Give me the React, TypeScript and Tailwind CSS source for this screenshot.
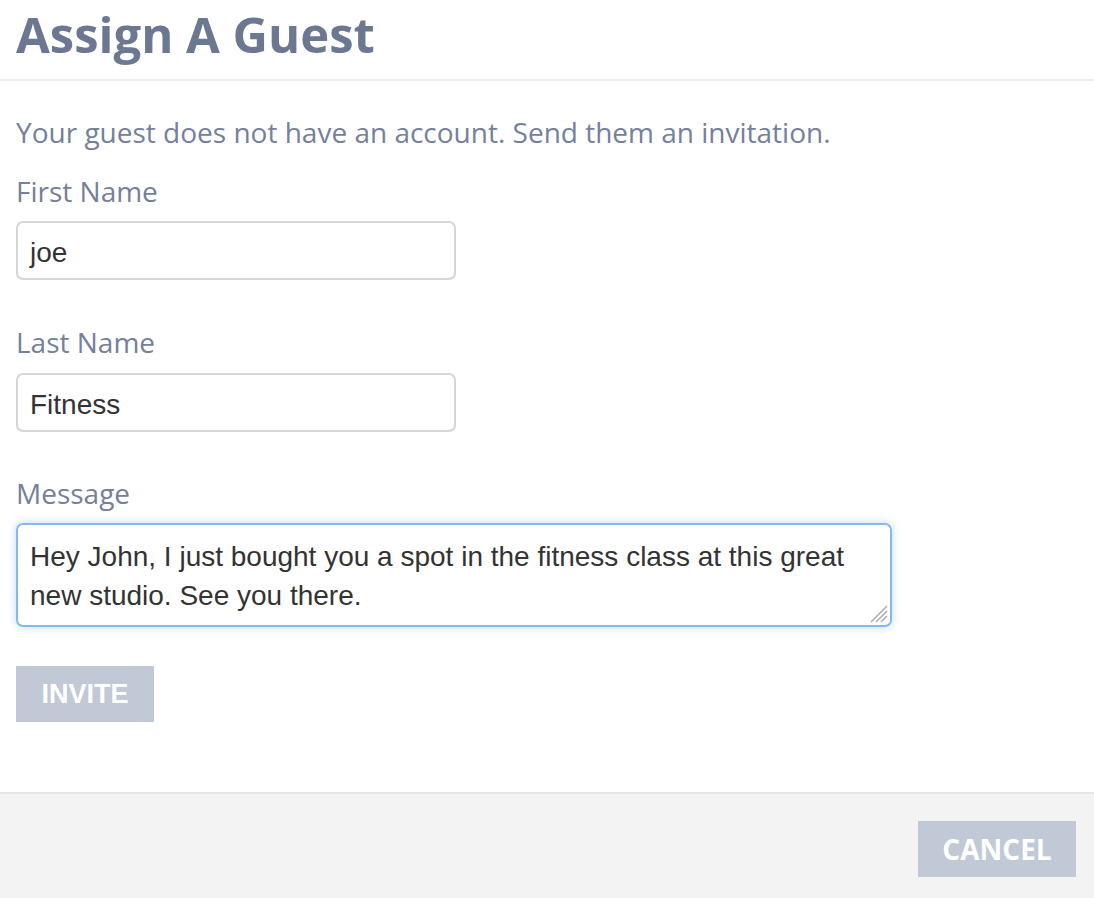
import React from "react";

export default function App() {
  const sans = { fontFamily: '"Open Sans", "Noto Sans", sans-serif' };
  const arial = { fontFamily: '"Liberation Sans", Arial, sans-serif' };
  return (
    <div className="w-[1094px] h-[898px] bg-white flex flex-col overflow-hidden" style={sans}>
      <div className="h-[81px] border-b-2 border-[#ececec] pl-[16px] flex items-start">
        <h1 className="text-[49px] leading-[68px] font-bold text-[#6c7791]">Assign A Guest</h1>
      </div>
      <div className="flex-1 pl-[16px]">
        <p className="mt-[34px] text-[28px] leading-[34px] text-[#75809a]">
          Your guest does not have an account. Send them an invitation.
        </p>
        <div className="mt-[25px] text-[28px] leading-[34px] text-[#75809a]">First Name</div>
        <div className="mt-[13px] w-[440px] h-[59px] rounded-[7px] border-2 border-[#d6d6d6] flex items-center px-[12px] pt-[4px] text-[28px] text-[#333]" style={arial}>
          joe
        </div>
        <div className="mt-[45px] text-[28px] leading-[34px] text-[#75809a]">Last Name</div>
        <div className="mt-[14px] w-[440px] h-[59px] rounded-[7px] border-2 border-[#d6d6d6] flex items-center px-[12px] pt-[4px] text-[28px] text-[#333]" style={arial}>
          Fitness
        </div>
        <div className="mt-[44px] text-[28px] leading-[34px] text-[#75809a]">Message</div>
        <div className="relative mt-[13px] w-[876px] h-[104px] rounded-[7px] border-2 border-[#86b8ee] shadow-[0_0_8px_rgba(102,175,233,0.45)] px-[12px] pt-[12px] text-[28px] leading-[39px] text-[#333]" style={arial}>
          Hey John, I just bought you a spot in the fitness class at this great new studio. See you there.
          <svg className="absolute right-[2px] bottom-[2px]" width="20" height="20" viewBox="0 0 20 20">
            <line x1="19" y1="3" x2="3" y2="19" stroke="#aaa" strokeWidth="1.5" />
            <line x1="19" y1="8" x2="8" y2="19" stroke="#aaa" strokeWidth="1.5" />
            <line x1="19" y1="13" x2="13" y2="19" stroke="#aaa" strokeWidth="1.5" />
          </svg>
        </div>
        <button className="mt-[39px] w-[138px] h-[56px] bg-[#c1c9d6] text-white text-[27px] font-bold flex items-center justify-center" style={arial}>
          INVITE
        </button>
      </div>
      <div className="h-[106px] border-t-2 border-[#e6e6e6] bg-[#f3f3f3] flex justify-end items-start pr-[18px] pt-[27px]">
        <button className="w-[158px] h-[56px] bg-[#c1c9d6] text-white text-[28px] font-bold flex items-center justify-center">
          CANCEL
        </button>
      </div>
    </div>
  );
}
